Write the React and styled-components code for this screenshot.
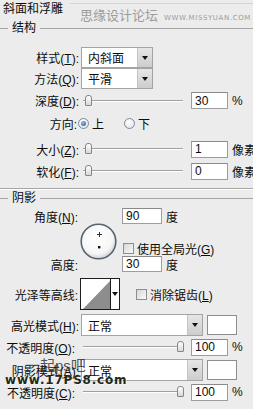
import React from 'react'
import styled, { createGlobalStyle, css } from 'styled-components'

const GlobalStyle = createGlobalStyle`
  html, body { margin: 0; padding: 0; background: #ececec; }
  body {
    font-family: "Liberation Sans", "Noto Sans CJK SC", sans-serif;
    font-size: 12px;
    color: #0c0c0c;
  }
  u { text-underline-offset: 1px; }
`

const Panel = styled.div`
  position: relative;
  width: 253px;
  height: 409px;
  overflow: hidden;
  background: #ececec;
`

const TitleBar = styled.div`
  display: flex;
  align-items: flex-start;
  height: 19px;
`

const Title = styled.div`
  width: 67px;
  padding-left: 3px;
  line-height: 18px;
  white-space: nowrap;
`

const SiteMark = styled.div`
  flex: 1;
  display: flex;
  align-items: baseline;
  gap: 6px;
  height: 22px;
  margin-top: 3px;
  padding: 4px 0 0 10px;
  box-sizing: border-box;
  border-top: 1px solid #d4d4d4;
  color: #9c9c9c;
  white-space: nowrap;
`

const SiteName = styled.span`
  font-size: 13px;
  line-height: 15px;
`

const SiteUrl = styled.span`
  font-family: "DejaVu Sans", sans-serif;
  font-size: 7px;
  letter-spacing: 0.6px;
`

const Group = styled.section`
  ${p => p.$closed && css`
    border-bottom: 1px solid #a6a6a6;
    box-shadow: 0 1px 0 #fff;
  `}
  padding-bottom: ${p => p.$pb || 0}px;
`

const GroupHead = styled.div`
  display: flex;
  align-items: center;
  height: 18px;
  &::before { content: ''; width: 8px; border-top: 1px solid #a6a6a6; }
  &::after { content: ''; flex: 1; border-top: 1px solid #a6a6a6; }
`

const GroupName = styled.span`
  padding: 0 4px;
  line-height: 18px;
`

const GroupBody = styled.div`
  padding-top: ${p => p.$pt || 0}px;
`

const Field = styled.div`
  display: grid;
  grid-template-columns: ${p => p.$label || 79}px auto;
  column-gap: ${p => (p.$gap != null ? p.$gap : 2)}px;
  align-items: center;
  height: ${p => p.$h || 22}px;
  margin-top: ${p => p.$mt || 0}px;
`

const Label = styled.label`
  text-align: right;
  white-space: nowrap;
  padding-right: ${p => p.$pr || 0}px;
`

const Controls = styled.div`
  display: flex;
  align-items: center;
`

const Select = styled.div`
  display: flex;
  width: ${p => p.$w}px;
  height: ${p => p.$h || 20}px;
  box-sizing: border-box;
  border: 1px solid #a4a4a4;
  background: #fff;
`

const SelectText = styled.span`
  flex: 1;
  padding-left: 6px;
  display: flex;
  align-items: center;
`

const SelectButton = styled.span`
  width: 14px;
  display: flex;
  align-items: center;
  justify-content: center;
  border-left: 1px solid #c4c4c4;
  background: linear-gradient(#e6e6e6, #cdcdcd);
  &::after {
    content: '';
    border-left: 3px solid transparent;
    border-right: 3px solid transparent;
    border-top: 4px solid #111;
  }
`

const Slider = styled.div`
  position: relative;
  width: 100px;
  height: 12px;
  margin-left: ${p => p.$ml || 2}px;
  &::before {
    content: '';
    position: absolute;
    left: 0;
    right: 0;
    top: 5px;
    border-top: 1px solid #a0a0a0;
    border-bottom: 1px solid #fff;
  }
`

const Thumb = styled.span`
  position: absolute;
  top: 0;
  width: 7px;
  height: 11px;
  box-sizing: border-box;
  border: 1px solid #868686;
  border-radius: 3px 3px 1px 1px;
  background: linear-gradient(#fff, #d8d8d8);
`

const NumInput = styled.div`
  width: ${p => p.$w || 37}px;
  height: ${p => p.$h || 17}px;
  margin-left: ${p => p.$ml || 0}px;
  box-sizing: border-box;
  border: 1px solid #9d9d9d;
  border-top-color: #8a8a8a;
  background: #fff;
  padding-left: 3px;
  display: flex;
  align-items: center;
`

const Unit = styled.span`
  margin-left: ${p => p.$ml || 4}px;
  white-space: nowrap;
`

const Radio = styled.span`
  position: relative;
  display: inline-block;
  width: 11px;
  height: 11px;
  box-sizing: border-box;
  border-radius: 50%;
  border: 1px solid #7a8b9c;
  background: radial-gradient(circle at 40% 35%, #fff, #d9dee4);
  margin-left: ${p => p.$ml || 0}px;
  ${p => p.$on && css`
    &::after {
      content: '';
      position: absolute;
      inset: 2px;
      border-radius: 50%;
      background: radial-gradient(circle at 40% 35%, #8fc0ee, #1d4f88);
    }
  `}
`

const RadioText = styled.span`
  margin-left: 3px;
`

const Check = styled.span`
  display: inline-block;
  width: 11px;
  height: 11px;
  box-sizing: border-box;
  border: 1px solid #8e8e8e;
  background: linear-gradient(135deg, #d6d6d6, #fafafa);
  margin-left: ${p => p.$ml || 0}px;
`

const CheckText = styled.span`
  margin-left: 3px;
  white-space: nowrap;
`

const AngleGrid = styled.div`
  display: grid;
  grid-template-columns: 80px 42px auto;
  grid-template-rows: repeat(4, 16px);
  align-items: center;
`

const Dial = styled.div`
  grid-column: 2;
  grid-row: 2 / 5;
  align-self: start;
  margin-top: -1px;
  width: 38px;
  height: 38px;
`

const ContourBox = styled.div`
  display: flex;
  width: 40px;
  height: 32px;
  box-sizing: border-box;
  border: 1px solid #1c1c1c;
  background: #fff;
  padding: 1px 0 0 1px;
`

const ContourArrow = styled.span`
  flex: 1;
  display: flex;
  align-items: center;
  justify-content: center;
  border-left: 1px solid #1c1c1c;
  margin-top: -1px;
  &::after {
    content: '';
    border-left: 3px solid transparent;
    border-right: 3px solid transparent;
    border-top: 4px solid #111;
  }
`

const Swatch = styled.div`
  width: 30px;
  height: 20px;
  margin-left: 4px;
  box-sizing: border-box;
  border: 1px solid #8e8e8e;
  background: #fff;
`

const Stamp = styled.div`
  position: absolute;
  left: 5px;
  top: 358px;
  pointer-events: none;
`

const StampCn = styled.div`
  margin-left: 20px;
  font-size: 15px;
  line-height: 15px;
  color: rgba(40, 40, 40, 0.8);
`

const StampUrl = styled.div`
  font-family: "DejaVu Sans", sans-serif;
  font-weight: bold;
  font-size: 12px;
  line-height: 14px;
  letter-spacing: 0.8px;
  color: #1f2a1a;
  text-shadow: 1px 1px 0 rgba(255, 255, 255, 0.6);
`

function SliderField({ label, pos, value, unit, mt, labelPr, sliderMl }) {
  return (
    <Field $mt={mt}>
      <Label $pr={labelPr}>{label}</Label>
      <Controls>
        <Slider $ml={sliderMl}>
          <Thumb style={{ left: pos }} />
        </Slider>
        <NumInput $ml={8}>{value}</NumInput>
        <Unit>{unit}</Unit>
      </Controls>
    </Field>
  )
}

function DropField({ label, value, width, h, mt, swatch }) {
  return (
    <Field $h={h} $mt={mt}>
      <Label>{label}</Label>
      <Controls>
        <Select $w={width} $h={h}>
          <SelectText>{value}</SelectText>
          <SelectButton />
        </Select>
        {swatch && <Swatch />}
      </Controls>
    </Field>
  )
}

function AngleDial() {
  return (
    <svg width="38" height="38" viewBox="0 0 38 38">
      <defs>
        <radialGradient id="dialFill" cx="45%" cy="40%" r="60%">
          <stop offset="0%" stopColor="#ffffff" />
          <stop offset="75%" stopColor="#f6f6f6" />
          <stop offset="100%" stopColor="#cfd3d8" />
        </radialGradient>
      </defs>
      <circle cx="18.5" cy="18.5" r="17.3" fill="url(#dialFill)" stroke="#56626e" strokeWidth="1.6" />
      <path d="M19.5 9v5M17 11.5h5" stroke="#333" strokeWidth="1" />
      <rect x="18" y="23" width="2.4" height="2.4" fill="#111" />
    </svg>
  )
}

export default function App() {
  return (
    <Panel>
      <GlobalStyle />
      <TitleBar>
        <Title>斜面和浮雕</Title>
        <SiteMark>
          <SiteName>思缘设计论坛</SiteName>
          <SiteUrl>WWW.MISSYUAN.COM</SiteUrl>
        </SiteMark>
      </TitleBar>

      <Group $closed $pb={6}>
        <GroupHead><GroupName>结构</GroupName></GroupHead>
        <GroupBody $pt={10}>
          <DropField label={<>样式(<u>T</u>):</>} value="内斜面" width={72} h={21} />
          <DropField label={<>方法(<u>Q</u>):</>} value="平滑" width={72} h={21} />
          <Field $h={23}>
            <Label>深度(<u>D</u>):</Label>
            <Controls>
              <Slider><Thumb style={{ left: 2 }} /></Slider>
              <NumInput $ml={8}>30</NumInput>
              <Unit>%</Unit>
            </Controls>
          </Field>
          <Field $label={77} $gap={1}>
            <Label>方向:</Label>
            <Controls>
              <Radio $on />
              <RadioText>上</RadioText>
              <Radio $ml={20} />
              <RadioText>下</RadioText>
            </Controls>
          </Field>
          <SliderField label={<>大小(<u>Z</u>):</>} pos={2} value="1" unit="像素" mt={4} />
          <SliderField label={<>软化(<u>F</u>):</>} pos={2} value="0" unit="像素" />
        </GroupBody>
      </Group>

      <Group>
        <GroupHead><GroupName>阴影</GroupName></GroupHead>
        <GroupBody $pt={1}>
          <AngleGrid>
            <Label $pr={2} style={{ gridColumn: 1, gridRow: 1 }}>角度(<u>N</u>):</Label>
            <NumInput $w={40} $h={16} style={{ gridColumn: 3, gridRow: 1 }}>
              90
            </NumInput>
            <Unit style={{ gridColumn: 3, gridRow: 1, marginLeft: 44 }}>度</Unit>
            <Dial><AngleDial /></Dial>
            <Controls style={{ gridColumn: 3, gridRow: 3 }}>
              <Check $ml={1} />
              <CheckText>使用全局光(<u>G</u>)</CheckText>
            </Controls>
            <Label $pr={2} style={{ gridColumn: 1, gridRow: 4 }}>高度:</Label>
            <NumInput $w={40} $h={16} style={{ gridColumn: 3, gridRow: 4 }}>
              30
            </NumInput>
            <Unit style={{ gridColumn: 3, gridRow: 4, marginLeft: 44 }}>度</Unit>
          </AngleGrid>

          <Field $h={32} $mt={6} $label={80} $gap={0}>
            <Label $pr={2}>光泽等高线:</Label>
            <Controls>
              <ContourBox>
                <svg width="28" height="29" viewBox="0 0 28 29">
                  <polygon points="1,29 28,1 28,29" fill="#8d8d8d" />
                </svg>
                <ContourArrow />
              </ContourBox>
              <Check $ml={16} />
              <CheckText>消除锯齿(<u>L</u>)</CheckText>
            </Controls>
          </Field>

          <DropField label={<>高光模式(<u>H</u>):</>} value="正常" width={122} h={22} mt={4} swatch />
          <SliderField label={<>不透明度(<u>O</u>):</>} pos={94} value="100" unit="%" labelPr={4} />
          <DropField label={<>阴影模式(<u>A</u>):</>} value="正常" width={122} h={22} mt={1} swatch />
          <SliderField label={<>不透明度(<u>C</u>):</>} pos={94} value="100" unit="%" labelPr={4} />
        </GroupBody>
      </Group>

      <Stamp>
        <StampCn>一起ps吧</StampCn>
        <StampUrl>www.17PS8.com</StampUrl>
      </Stamp>
    </Panel>
  )
}
